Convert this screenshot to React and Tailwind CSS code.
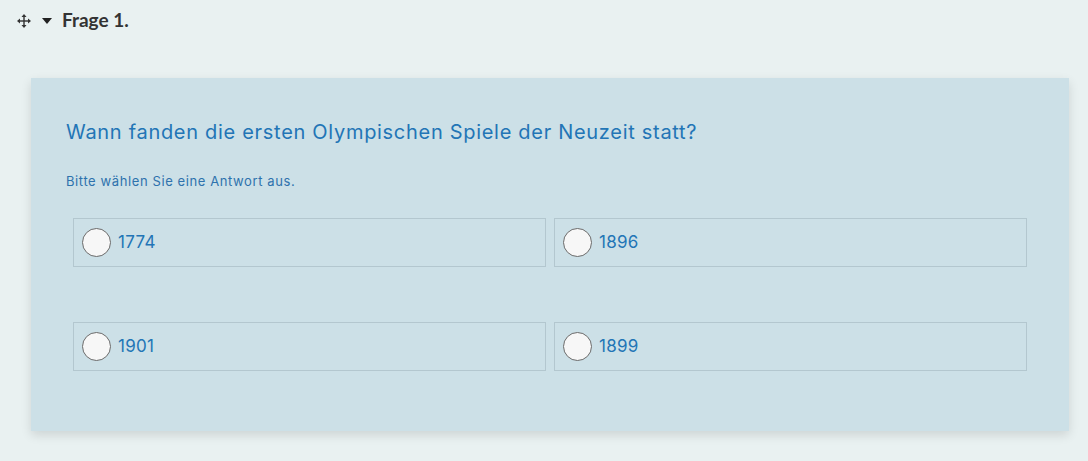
const ANSWERS = ['1774', '1896', '1901', '1899']

function MoveIcon() {
  return (
    <svg width="14" height="14" viewBox="0 0 14 14" fill="#333">
      <rect x="6.3" y="3" width="1.4" height="8" />
      <rect x="3" y="6.3" width="8" height="1.4" />
      <path d="M7 0 L9.5 3 L4.5 3 Z" />
      <path d="M7 14 L9.5 11 L4.5 11 Z" />
      <path d="M0 7 L3 4.5 L3 9.5 Z" />
      <path d="M14 7 L11 4.5 L11 9.5 Z" />
    </svg>
  )
}

export default function App() {
  return (
    <div className="min-h-[461px] bg-[#e9f1f1] pt-[7px]">
      <div className="flex h-[27px] items-center pl-[17px]" style={{ fontFamily: 'Lato, sans-serif' }}>
        <MoveIcon />
        <svg width="10" height="6" viewBox="0 0 10 6" className="ml-[11px]">
          <path d="M0 0 L10 0 L5 6 Z" fill="#222" />
        </svg>
        <span className="ml-[10px] text-[19px] font-bold text-[#333]">Frage 1.</span>
      </div>

      <div
        className="ml-[31px] mr-[19px] mt-[44px] h-[353px] bg-[#cce0e7] px-[35px] pt-[40px] shadow-[0_4px_10px_rgba(0,0,0,0.12)]"
        style={{ fontFamily: 'Inter, sans-serif' }}
      >
        <h2 className="text-[20px] leading-[28px] tracking-[0.7px] text-[#2275b6]">
          Wann fanden die ersten Olympischen Spiele der Neuzeit statt?
        </h2>
        <p className="mt-[26px] text-[13px] leading-[18px] tracking-[0.6px] text-[#2e72ad]">Bitte wählen Sie eine Antwort aus.</p>
        <div className="mt-[28px] grid grid-cols-2 gap-x-[8px] gap-y-[55px] px-[7px]">
          {ANSWERS.map((a) => (
            <label key={a} className="flex h-[49px] items-center gap-[7px] border border-[#b3c7cf] px-[8px]">
              <span className="h-[29px] w-[29px] rounded-full border border-[#6a6a6a] bg-[#f7f7f7]" />
              <span className="text-[17px] tracking-[0.3px] text-[#2275b6]">{a}</span>
            </label>
          ))}
        </div>
      </div>
    </div>
  )
}
